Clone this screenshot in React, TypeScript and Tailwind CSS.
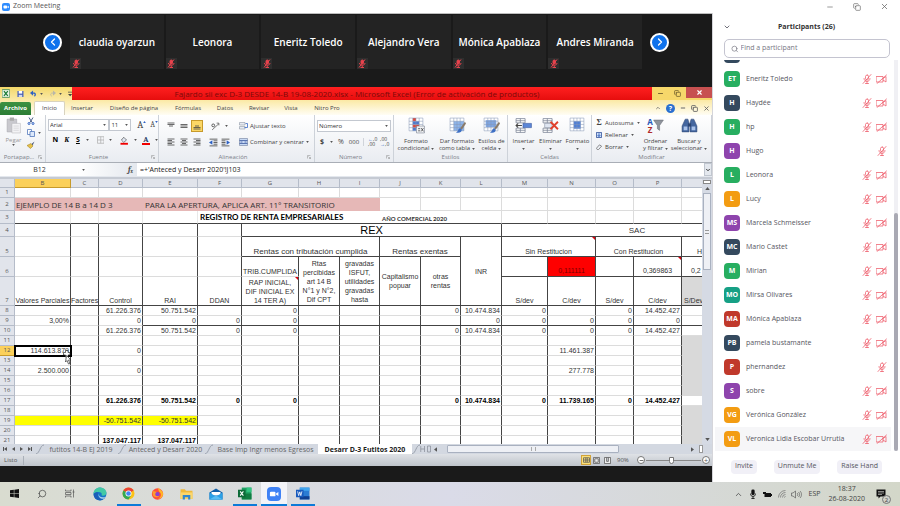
import { useState, type ReactNode } from "react";
import {
  ChevronDown,
  ChevronLeft,
  ChevronRight,
  ChevronUp,
  Copy,
  Minus,
  Search,
  X,
} from "lucide-react";
import clsx from "clsx";

const SPEAKERS = [
  "claudia oyarzun",
  "Leonora",
  "Eneritz Toledo",
  "Alejandro Vera",
  "Mónica Apablaza",
  "Andres Miranda",
];

interface Person {
  initials: string;
  name: string;
  color: string;
  micOnly?: boolean;
}

const PEOPLE: Person[] = [
  { initials: "", name: "", color: "bg-[#34495e]" },
  { initials: "ET", name: "Eneritz Toledo", color: "bg-[#27ae60]" },
  { initials: "H", name: "Haydée", color: "bg-[#34495e]" },
  { initials: "H", name: "hp", color: "bg-[#27ae60]" },
  { initials: "H", name: "Hugo", color: "bg-[#8e44ad]", micOnly: true },
  { initials: "L", name: "Leonora", color: "bg-[#27ae60]" },
  { initials: "L", name: "Lucy", color: "bg-[#f39c12]" },
  { initials: "MS", name: "Marcela Schmeisser", color: "bg-[#8e44ad]" },
  { initials: "MC", name: "Mario Castet", color: "bg-[#34495e]" },
  { initials: "M", name: "Mirian", color: "bg-[#27ae60]" },
  { initials: "MO", name: "Mirsa Olivares", color: "bg-[#16a085]" },
  { initials: "MA", name: "Mónica Apablaza", color: "bg-[#c0392b]" },
  { initials: "PB", name: "pamela bustamante", color: "bg-[#34495e]" },
  { initials: "P", name: "phernandez", color: "bg-[#c0392b]", micOnly: true },
  { initials: "S", name: "sobre", color: "bg-[#8e44ad]" },
  { initials: "VG", name: "Verónica González", color: "bg-[#f39c12]" },
  { initials: "VL", name: "Veronica Lidia Escobar Urrutia", color: "bg-[#f39c12]" },
];

const COLUMNS = ["B", "C", "D", "E", "F", "G", "H", "I", "J", "K", "L", "M", "N", "O", "P", "Q"];
const COL_WIDTHS = [15, 56, 28, 44, 55, 44, 57, 41, 40, 41, 40, 41, 46, 48, 38, 48, 91];

interface SheetRow {
  n: number;
  cells: Record<string, string>;
  bold?: boolean;
}

const ROWS: SheetRow[] = [
  { n: 8, cells: { D: "61.226.376", E: "50.751.542", G: "0", K: "0", L: "10.474.834", M: "0", O: "0", P: "14.452.427" } },
  { n: 9, cells: { B: "3,00%", D: "0", E: "0", F: "0", G: "0", L: "0", M: "0", N: "0", O: "0", P: "0" } },
  { n: 10, cells: { D: "61.226.376", E: "50.751.542", F: "0", G: "0", K: "0", L: "10.474.834", M: "0", N: "0", O: "0", P: "14.452.427" } },
  { n: 11, cells: {} },
  { n: 12, cells: { B: "114.613.879", D: "0", N: "11.461.387" } },
  { n: 13, cells: {} },
  { n: 14, cells: { B: "2.500.000", D: "0", N: "277.778" } },
  { n: 15, cells: {} },
  { n: 16, cells: {} },
  { n: 17, bold: true, cells: { D: "61.226.376", E: "50.751.542", F: "0", G: "0", K: "0", L: "10.474.834", M: "0", N: "11.739.165", O: "0", P: "14.452.427" } },
  { n: 18, cells: {} },
  { n: 19, cells: { D: "-50.751.542", E: "-50.751.542" } },
  { n: 20, cells: {} },
  { n: 21, bold: true, cells: { D: "137.047.117", E: "137.047.117" } },
];

const WHITE_Q = [8, 9, 10, 17];

function Caret() {
  return (
    <svg viewBox="0 0 4 3" className="h-[2px] w-[3px] shrink-0">
      <path d="M0 0h4L2 3z" fill="#555" />
    </svg>
  );
}

function TitleBar() {
  return (
    <header className="flex h-[13px] shrink-0 items-center bg-white text-[7px] text-[#555]">
      <svg viewBox="0 0 16 16" className="mr-[3px] ml-[2px] size-2">
        <rect width="16" height="16" rx="4" fill="#2d8cff" />
        <rect x="3" y="5" width="7" height="6" rx="1.5" fill="#fff" />
        <path d="M10.5 7.5 13.5 5.3v5.4l-3-2.2z" fill="#fff" />
      </svg>
      <h1 className="flex-1">Zoom Meeting</h1>
      <div className="flex items-center gap-[19px] pr-[11px] text-[#666]">
        <button aria-label="Minimize"><Minus size={8} strokeWidth={2} /></button>
        <button aria-label="Restore"><Copy size={8} strokeWidth={2} className="-scale-x-100 -rotate-90" /></button>
        <button aria-label="Close"><X size={9} strokeWidth={2} /></button>
      </div>
    </header>
  );
}

function ArrowButton({ dir }: { dir: "left" | "right" }) {
  const Icon = dir === "left" ? ChevronLeft : ChevronRight;
  return (
    <button
      aria-label={dir === "left" ? "Previous" : "Next"}
      className="flex size-[19px] items-center justify-center rounded-full border-2 border-white bg-[#0e72ed] text-white"
    >
      <Icon size={12} strokeWidth={2.5} />
    </button>
  );
}

function SpeakerStrip() {
  return (
    <section className="flex h-[73px] shrink-0 bg-[#1a1a1a] pt-px">
      <div className="flex h-[54px] w-[70px] shrink-0 items-center justify-end pr-2">
        <ArrowButton dir="left" />
      </div>
      <ul className="grid h-[54px] flex-1 grid-cols-6 gap-[2px]">
        {SPEAKERS.map((name) => (
          <li key={name} className="relative flex items-center justify-center bg-[#232323]">
            <span className="whitespace-nowrap text-[10px] font-semibold text-white">{name}</span>
            <span className="absolute bottom-0 left-0 flex size-[11px] items-center justify-center bg-[#2e2e2e]">
              <svg viewBox="0 0 16 18" className="h-[9px] w-[8px]" fill="none" stroke="#e8434d" strokeWidth="2">
                <rect x="6" y="2" width="5" height="8" rx="2.5" fill="#e8434d" />
                <path d="M3 8c0 6 11 6 11 0M8.500 13v4M5 17h7M14 1 2 17" />
              </svg>
            </span>
          </li>
        ))}
      </ul>
      <div className="flex h-[54px] w-[70px] shrink-0 items-center pl-2">
        <ArrowButton dir="right" />
      </div>
    </section>
  );
}

function ExcelTitle() {
  return (
    <div className="flex h-[13px] shrink-0 bg-[#f6d76a]">
      <div className="flex w-[72px] items-center gap-[6px] bg-linear-to-b from-[#f3d768] to-[#fbeaa6] pl-[2px]">
        <svg viewBox="0 0 16 16" className="size-[9px]">
          <rect width="16" height="16" rx="1" fill="#e8f3e6" stroke="#2e7d3c" strokeWidth="1.5" />
          <path d="m4 3 8 10M12 3 4 13" stroke="#1d7a35" strokeWidth="2.5" />
        </svg>
        <svg viewBox="0 0 16 16" className="ml-px size-2">
          <path d="M1 1h14v14H1z" fill="#4d63b5" />
          <path d="M4 1h8v6H4z" fill="#fff" />
          <path d="M4 10h8v5H4z" fill="#cfd7ef" />
        </svg>
        <span className="flex items-center gap-[3px]">
          <svg viewBox="0 0 16 16" className="size-[7px]">
            <path d="M3 7h7a4 4 0 0 1 0 7" fill="none" stroke="#2f62c4" strokeWidth="3" />
            <path d="M7 1v12L0 7z" fill="#2f62c4" />
          </svg>
          <Caret />
        </span>
        <span className="flex items-center gap-[3px]">
          <svg viewBox="0 0 16 16" className="size-[7px]">
            <path d="M13 7H6a4 4 0 0 0 0 7" fill="none" stroke="#b9b7a8" strokeWidth="2" />
            <path d="M9 1v12l7-6z" fill="#b9b7a8" />
          </svg>
          <Caret />
        </span>
        <svg viewBox="0 0 6 8" className="h-[6px] w-[5px]">
          <path d="M0 1h6v1H0zM0 4h6L3 7z" fill="#444" />
        </svg>
      </div>
      <h2 className="flex-1 bg-linear-to-b from-[#ff1f1f] to-[#e60d0d] pr-[10px] text-center text-[8px] leading-[13px] whitespace-nowrap text-[#7c0a0a]">
        Fajardo sii exc D-3 DESDE 14-B 19-08-2020.xlsx - Microsoft Excel (Error de activación de productos)
      </h2>
      <div className="flex w-[60px] items-center text-[#6b5a2a]">
        <button aria-label="Minimize window" className="flex flex-1 justify-center"><Minus size={7} strokeWidth={3} /></button>
        <button aria-label="Restore window" className="flex flex-1 justify-center"><Copy size={7} strokeWidth={2.5} className="-scale-x-100 -rotate-90" /></button>
        <button aria-label="Close window" className="flex h-[11px] w-[26px] items-center justify-center self-start bg-[#c75050] text-white">
          <X size={7} strokeWidth={4} />
        </button>
      </div>
    </div>
  );
}

const MENU = [
  { label: "Insertar", cls: "w-[34px]" },
  { label: "Diseño de página", cls: "w-[70px]" },
  { label: "Fórmulas", cls: "w-[38px]" },
  { label: "Datos", cls: "w-[36px]" },
  { label: "Revisar", cls: "w-[32px]" },
  { label: "Vista", cls: "w-[32px]" },
  { label: "Nitro Pro", cls: "w-[40px]" },
];

function RibbonTabs() {
  return (
    <nav className="flex h-[15px] shrink-0 items-end bg-linear-to-b from-[#fbe9a4] to-[#fffdf4] text-[6px] text-[#444]">
      <button className="h-[13px] w-[31px] rounded-t-[2px] bg-linear-to-b from-[#3d9142] to-[#2c7d35] font-bold text-white">Archivo</button>
      <button className="ml-[3px] h-[14px] w-[31px] rounded-t-[2px] border-x border-t border-[#d8d3bf] bg-white">Inicio</button>
      {MENU.map((m) => (
        <button key={m.label} className={clsx("h-[14px] whitespace-nowrap", m.cls)}>{m.label}</button>
      ))}
      <div className="ml-auto flex h-[14px] items-center gap-[5px] pr-[2px] text-[#666]">
        <ChevronUp size={6} strokeWidth={3} />
        <button aria-label="Help" className="flex size-[9px] items-center justify-center rounded-full bg-[#2a6fd0] text-[7px] leading-none font-bold text-white">?</button>
        <Minus size={6} strokeWidth={4} />
        <Copy size={7} strokeWidth={3} className="-scale-x-100 -rotate-90" />
        <X size={7} strokeWidth={3} />
      </div>
    </nav>
  );
}

function Group({ label, cls, launcher, children }: { label: string; cls: string; launcher?: boolean; children: ReactNode }) {
  return (
    <section className={clsx("flex shrink-0 flex-col border-r border-[#cdd2d9]", cls)}>
      <div className="min-h-0 flex-1">{children}</div>
      <div className="flex h-[10px] items-center text-[6px] text-[#7b8089]">
        <span className="flex-1 text-center whitespace-nowrap">{label}</span>
        {launcher && (
          <svg viewBox="0 0 8 8" className="mr-[3px] size-[4px]">
            <path d="M1 7V1h6M3 3l4 4M7 4v3H4" fill="none" stroke="#888" />
          </svg>
        )}
      </div>
    </section>
  );
}

function AlignIcon({ kind }: { kind: "top" | "middle" | "bottom" | "left" | "center" | "right" }) {
  const paths = {
    top: "M1 2h14M1 5h14M4 8h8",
    middle: "M1 5h14M1 8h14M1 11h14",
    bottom: "M4 8h8M1 11h14M1 14h14",
    left: "M1 2h14M1 5h9M1 8h14M1 11h9M1 14h14",
    center: "M1 2h14M4 5h8M1 8h14M4 11h8M1 14h14",
    right: "M1 2h14M6 5h9M1 8h14M6 11h9M1 14h14",
  };
  return (
    <svg viewBox="0 0 16 16" className="size-[8px]">
      <path d={paths[kind]} stroke="#444" strokeWidth="1.6" />
    </svg>
  );
}

function IndentIcon({ flip }: { flip?: boolean }) {
  return (
    <svg viewBox="0 0 16 16" className={clsx("size-[9px]", flip && "-scale-x-100")}>
      <path d="M1 2h14M8 5h7M8 8h7M8 11h7M1 14h14" stroke="#555" strokeWidth="1.6" />
      <path d="M6 4v8L0 8z" fill="#2f62c4" />
    </svg>
  );
}

function GridIcon({ kind }: { kind: "cond" | "table" | "cell" | "insert" | "delete" | "format" }) {
  const loose = kind === "insert" || kind === "delete";
  return (
    <svg viewBox="0 0 32 32" className="size-[17px]">
      {loose ? (
        <>
          <path d="M2 3h17v8H2zM2 21h17v8H2zM10 3v8M10 21v8M2 25h17M2 7h17" fill="#fff" stroke="#7d8798" strokeWidth="1.5" />
          {kind === "insert" ? (
            <>
              <path d="M15 12h16v8H15z" fill="#5b86d6" stroke="#35549b" />
              <path d="M13 16H2M6 12l-4 4 4 4" fill="none" stroke="#444" strokeWidth="2" />
            </>
          ) : (
            <>
              <path d="M5 12h14v8H5z" fill="#dfe6f2" stroke="#7d8798" />
              <path d="m16 9 14 14M30 9 16 23" stroke="#e0412c" strokeWidth="3.5" />
            </>
          )}
        </>
      ) : (
        <>
          <path d="M2 2h26v24H2z" fill="#fff" />
          {kind === "cond" && (
            <>
              <path d="M9 2h6v6H9zM9 14h12v6H9z" fill="#e0483a" />
              <path d="M9 8h12v6H9zM9 20h6v6H9z" fill="#4b78cf" />
            </>
          )}
          {kind === "table" && <path d="M9 8h19v18H9z" fill="#8db4ea" />}
          {kind === "cell" && <path d="M5 6h20v13H5z" fill="#7fa6e3" />}
          {kind === "format" && <path d="M9 8h13v14H9z" fill="#4f7fd6" />}
          <path d="M2 2h26v24H2zM9 2v24M15 2v24M21 2v24M2 8h26M2 14h26M2 20h26" fill="none" stroke="#8797b5" />
          {kind === "cond" && (
            <>
              <path d="M16 17h15v13H16z" fill="#f1f3f6" stroke="#6a7280" />
              <path d="M19 22h4M19 26h4M25 21l4 6M29 21l-4 6" stroke="#444" strokeWidth="1.5" />
            </>
          )}
          {(kind === "table" || kind === "cell") && (
            <>
              <path d="m30 9-9 12 3 3 8-12z" fill="#8a7a68" />
              <path d="M21 21c-4 0-3 6-8 8 6 2 11 0 11-5z" fill="#3d6fc4" />
            </>
          )}
        </>
      )}
    </svg>
  );
}

function BigButton({ lines, caretBelow, cls, children }: { lines: string[]; caretBelow?: boolean; cls: string; children: ReactNode }) {
  return (
    <button className={clsx("flex flex-col items-center text-[6px] leading-[7px] whitespace-nowrap text-[#444]", cls)}>
      <span className="mb-[4px] flex h-[17px] items-center">{children}</span>
      {lines.map((l, i) => (
        <span key={l} className="flex items-center gap-[2px]">
          {l}
          {!caretBelow && i === lines.length - 1 && <Caret />}
        </span>
      ))}
      {caretBelow && <span className="flex h-[7px] items-center"><Caret /></span>}
    </button>
  );
}

function Pick({ label, value, cls }: { label: string; value: string; cls: string }) {
  return (
    <label className={clsx("relative flex items-center border border-[#c3c8d0] bg-white", cls)}>
      <select aria-label={label} defaultValue={value} className="h-[10px] w-full appearance-none pl-[1px] text-[6px] leading-[10px] text-[#333] outline-none">
        <option>{value}</option>
      </select>
      <span className="pointer-events-none absolute right-[2px] flex"><Caret /></span>
    </label>
  );
}

function Ribbon() {
  return (
    <div className="flex h-[48px] shrink-0 overflow-hidden border-b border-[#a9aeb6] bg-linear-to-b from-white to-[#e9ecf1] text-[6px] text-[#444]">
      <Group label="Portapap…" cls="w-[46px]" launcher>
        <div className="flex pt-[2px] pl-[5px]">
          <button className="flex w-[17px] flex-col items-center text-[#999]">
            <svg viewBox="0 0 32 32" className="size-[17px]">
              <path d="M4 4h18v24H4z" fill="#c9c9ce" stroke="#a5a5aa" />
              <path d="M9 1h8v6H9z" fill="#aaa" />
              <path d="M13 12h16v18H13z" fill="#f3f3f5" stroke="#b3b3b8" />
              <path d="M16 17h10M16 21h10M16 25h10" stroke="#c5c5c9" />
            </svg>
            <span className="mt-[3px] leading-[7px]">Pegar</span>
            <Caret />
          </button>
          <div className="flex flex-col gap-[4px] pl-[5px]">
            <button aria-label="Cortar">
              <svg viewBox="0 0 16 16" className="size-[8px]">
                <path d="m4 1 6 10M12 1 6 11" stroke="#4a5d86" strokeWidth="2" />
                <circle cx="4" cy="13" r="2" fill="none" stroke="#2f62c4" strokeWidth="2" />
                <circle cx="12" cy="13" r="2" fill="none" stroke="#2f62c4" strokeWidth="2" />
              </svg>
            </button>
            <button aria-label="Copiar" className="flex items-center gap-[3px]">
              <svg viewBox="0 0 16 16" className="size-[8px]">
                <path d="M1 1h8v10H1z" fill="#fff" stroke="#4a72b8" strokeWidth="1.5" />
                <path d="M6 5h9v10H6z" fill="#dce8fa" stroke="#4a72b8" strokeWidth="1.5" />
              </svg>
              <Caret />
            </button>
            <button aria-label="Copiar formato">
              <svg viewBox="0 0 16 16" className="size-[8px]">
                <path d="m15 1-6 5 2 3z" fill="#46557a" />
                <path d="m8 5 4 5-5 5-7-6z" fill="#e5c04a" stroke="#9c7c1c" />
              </svg>
            </button>
          </div>
        </div>
      </Group>
      <Group label="Fuente" cls="w-[113px]" launcher>
        <div className="flex items-center pt-[4px] pl-[2px]">
          <Pick label="Fuente" value="Arial" cls="w-[62px]" />
          <Pick label="Tamaño" value="11" cls="w-[22px]" />
          <button aria-label="Aumentar tamaño" className="ml-[6px] flex items-start font-serif text-[10px] leading-[12px]">
            A<svg viewBox="0 0 4 3" className="mt-[2px] h-[2px] w-[3px]"><path d="M0 3h4L2 0z" fill="#2f62c4" /></svg>
          </button>
          <button aria-label="Disminuir tamaño" className="ml-[4px] flex items-start font-serif text-[8px] leading-[12px]">
            A<svg viewBox="0 0 4 3" className="mt-[2px] h-[2px] w-[3px]"><path d="M0 0h4L2 3z" fill="#2f62c4" /></svg>
          </button>
        </div>
        <div className="flex h-[12px] items-center gap-[5px] pt-[6px] pl-[6px] text-[7px] text-black">
          <button className="w-[7px] font-bold">N</button>
          <button className="w-[7px] font-serif font-bold italic">K</button>
          <button className="w-[6px] font-bold underline">S</button>
          <Caret />
          <svg viewBox="0 0 16 16" className="ml-[3px] size-[8px]"><path d="M1 1h14v14H1zM8 1v14M1 8h14" fill="none" stroke="#aaa" strokeWidth="1.5" /></svg>
          <Caret />
          <svg viewBox="0 0 18 18" className="ml-[3px] size-[9px]">
            <path d="m8 2 6 6-6 5-5-5z" fill="#dfe6f2" stroke="#555" strokeWidth="1.5" />
            <path d="M1 14h16v4H1z" fill="#f00000" />
          </svg>
          <Caret />
          <span className="flex w-[9px] flex-col items-center">
            <span className="font-serif text-[8px] leading-[7px] font-bold text-[#2b3d66]">A</span>
            <span className="h-[2px] w-full bg-[#f00000]" />
          </span>
          <Caret />
        </div>
      </Group>
      <Group label="Alineación" cls="w-[156px]" launcher>
        <div className="flex h-[22px] items-center pl-[8px]">
          <div className="flex w-[68px] items-center gap-[5px]">
            <AlignIcon kind="top" />
            <AlignIcon kind="middle" />
            <span className="-mx-[2px] flex size-[12px] items-center justify-center border border-[#c79a2b] bg-[#fbd766]"><AlignIcon kind="bottom" /></span>
            <svg viewBox="0 0 16 16" className="ml-[5px] size-[9px]">
              <path d="M2 14 14 3M10 2h4v4" fill="none" stroke="#666" strokeWidth="1.5" />
              <circle cx="4" cy="6" r="2.5" fill="none" stroke="#444" strokeWidth="1.5" />
            </svg>
            <Caret />
          </div>
          <button className="ml-[4px] flex items-center gap-[2px]">
            <svg viewBox="0 0 18 16" className="h-[8px] w-[9px]">
              <path d="M1 1h11v5H1zM1 9h11v5H1z" fill="#e8ecf3" stroke="#7b8494" />
              <path d="M13 3h4v8h-6" fill="none" stroke="#2f62c4" strokeWidth="1.5" />
            </svg>
            Ajustar texto
          </button>
        </div>
        <div className="flex h-[10px] items-center pl-[8px]">
          <div className="flex w-[68px] items-center gap-[5px]">
            <AlignIcon kind="left" />
            <AlignIcon kind="center" />
            <AlignIcon kind="right" />
            <span className="ml-[3px] flex gap-[3px]"><IndentIcon /><IndentIcon flip /></span>
          </div>
          <button className="ml-[4px] flex items-center gap-[2px] whitespace-nowrap">
            <svg viewBox="0 0 18 16" className="h-[8px] w-[9px]">
              <path d="M1 1h16v14H1z" fill="#c8daf5" stroke="#5a6b8c" />
              <path d="M1 5h16M1 11h16M3 8h4M15 8h-4" stroke="#35549b" strokeWidth="1.5" />
            </svg>
            Combinar y centrar
            <Caret />
          </button>
        </div>
      </Group>
      <Group label="Número" cls="w-[79px]" launcher>
        <div className="px-[2px] pt-[5px]">
          <Pick label="Formato de número" value="Número" cls="w-full" />
        </div>
        <div className="flex h-[20px] items-center pl-[5px] text-[7px]">
          <button className="mr-[6px] font-bold">$</button>
          <Caret />
          <button className="ml-[5px]">%</button>
          <button className="ml-[5px] text-[6px]">000</button>
          <span className="mx-[4px] h-[8px] border-l border-[#d0d4da]" />
          <button className="w-[12px] text-left text-[5px] leading-[5px] whitespace-nowrap"><span className="text-[#2f62c4]">←</span>,0<br />,00</button>
          <button className="w-[11px] text-left text-[5px] leading-[5px] whitespace-nowrap">,00<br /><span className="text-[#2f62c4]">→</span>,0</button>
        </div>
      </Group>
      <Group label="Estilos" cls="w-[114px]">
        <div className="flex pt-[2px]">
          <BigButton lines={["Formato", "condicional"]} cls="w-[44px]"><GridIcon kind="cond" /></BigButton>
          <BigButton lines={["Dar formato", "como tabla"]} cls="w-[38px]"><GridIcon kind="table" /></BigButton>
          <BigButton lines={["Estilos de", "celda"]} cls="w-[31px]"><GridIcon kind="cell" /></BigButton>
        </div>
      </Group>
      <Group label="Celdas" cls="w-[84px]">
        <div className="flex pt-[2px] pl-[2px]">
          <BigButton lines={["Insertar"]} caretBelow cls="w-[27px]"><GridIcon kind="insert" /></BigButton>
          <BigButton lines={["Eliminar"]} caretBelow cls="w-[27px]"><GridIcon kind="delete" /></BigButton>
          <BigButton lines={["Formato"]} caretBelow cls="w-[27px]"><GridIcon kind="format" /></BigButton>
        </div>
      </Group>
      <Group label="Modificar" cls="w-[120px]">
        <div className="flex pt-[2px]">
          <div className="flex w-[48px] flex-col pl-[4px]">
            <button className="flex h-[12px] items-center gap-[3px]"><b className="w-[6px] font-serif text-[8px]">Σ</b>Autosuma <Caret /></button>
            <button className="flex h-[12px] items-center gap-[3px]">
              <svg viewBox="0 0 14 14" className="size-[6px]"><path d="M1 1h12v12H1z" fill="#cfe0f8" stroke="#35549b" strokeWidth="2" /><path d="M7 3v6M4 7l3 4 3-4" fill="none" stroke="#2456b8" strokeWidth="2" /></svg>
              Rellenar <Caret />
            </button>
            <button className="flex h-[12px] items-center gap-[3px]">
              <svg viewBox="0 0 14 14" className="size-[6px]"><path d="m1 10 7-8 5 3-7 8H3z" fill="#eef1f6" stroke="#555" strokeWidth="1.5" /></svg>
              Borrar <Caret />
            </button>
          </div>
          <BigButton lines={["Ordenar", "y filtrar"]} cls="w-[31px]">
            <span className="flex flex-col text-[8px] leading-[8px] font-bold"><span className="text-[#2456b8]">A</span><span className="text-[#b02a2a]">Z</span></span>
            <svg viewBox="0 0 20 24" className="h-[13px] w-[11px]"><path d="M1 2h18l-7 10v9l-4-3v-6z" fill="#8f949c" stroke="#666b73" /></svg>
          </BigButton>
          <BigButton lines={["Buscar y", "seleccionar"]} cls="w-[36px]">
            <svg viewBox="0 0 32 28" className="h-[15px] w-[17px]">
              <path d="M8 2h5l2 7v17H2V15zM24 2h-5l-2 7v17h13V15z" fill="#44669f" stroke="#2d4673" />
              <path d="M5 16h7v7H5zM20 16h7v7h-7z" fill="#a9c2ea" />
              <path d="M13 10h6v6h-6z" fill="#2d4673" />
            </svg>
          </BigButton>
        </div>
      </Group>
    </div>
  );
}

function FormulaBar() {
  const [formula, setFormula] = useState("=+'Anteced y Desarr 2020'!J103");
  return (
    <div className="flex h-[16px] shrink-0 items-start border-b-2 border-[#c5cad3] bg-[#e4e8ee]">
      <input aria-label="Nombre de celda" defaultValue="B12" className="h-[13px] w-[79px] bg-white text-center text-[7px] text-[#333] outline-none" />
      <div className="flex h-[13px] w-[58px] items-center justify-between bg-linear-to-r from-white to-[#e4e8ee] pr-[4px] pl-[3px]">
        <Caret />
        <button aria-label="Insertar función" className="font-serif text-[8px] font-bold text-[#444] italic">f<sub className="text-[5px]">x</sub></button>
      </div>
      <input
        aria-label="Barra de fórmulas"
        value={formula}
        onChange={(e) => setFormula(e.target.value)}
        className="h-[13px] flex-1 bg-white pl-[3px] text-[7px] text-[#222] outline-none"
      />
      <button aria-label="Expandir" className="flex h-[13px] w-[8px] items-center justify-center border border-[#c0c6cf]"><ChevronDown size={6} strokeWidth={3} /></button>
    </div>
  );
}

const HEAD = "border-r border-b border-[#b5bcc9] bg-[#e1e4eb] p-0 text-center font-[Open_Sans,sans-serif] text-[6px] font-normal text-[#555]";
const HEAD_ACTIVE = "border-r border-b border-[#c79a2b] bg-[#fbd05a] p-0 text-center font-[Open_Sans,sans-serif] text-[6px] font-normal text-[#555]";
const LIGHT = "border-r border-b border-[#dcdcdc] p-0";
const BLOCK = "border-r border-b border-[#444] p-0 text-center font-normal";

function RowHead({ n, h, low }: { n: number; h: string; low?: boolean }) {
  return (
    <th scope="row" className={clsx(n === 12 ? HEAD_ACTIVE : HEAD, h, low ? "align-bottom" : "align-middle")}>
      {n}
    </th>
  );
}

function Flag() {
  return <span className="absolute top-0 right-0 border-t-[3px] border-l-[3px] border-t-[#d8000c] border-l-transparent" />;
}

function blanks(count: number, cls: string) {
  return Array.from({ length: count }, (_, i) => <td key={i} className={cls} />);
}

function Sheet() {
  return (
    <div className="min-w-0 flex-1 overflow-hidden bg-white">
      <table className="w-[773px] table-fixed border-separate border-spacing-0 font-[Liberation_Sans,Arial,sans-serif] text-[7px] leading-[9px] text-[#333]">
        <colgroup>
          {COL_WIDTHS.map((w, i) => <col key={i} style={{ width: w }} />)}
        </colgroup>
        <thead>
          <tr>
            <th className={clsx(HEAD, "h-[9px] leading-[8px]")} />
            {COLUMNS.map((c) => (
              <th key={c} scope="col" className={clsx(c === "B" ? HEAD_ACTIVE : HEAD, "h-[9px] leading-[8px]")}>{c}</th>
            ))}
          </tr>
        </thead>
        <tbody>
          <tr>
            <RowHead n={1} h="h-[10px]" />
            {blanks(16, LIGHT)}
          </tr>
          <tr className="font-[Open_Sans,sans-serif] text-[8px]">
            <RowHead n={2} h="h-[13px]" />
            <td colSpan={3} className="bg-[#e6b8b7] p-0 pl-px whitespace-nowrap">EJEMPLO DE 14 B a 14 D 3</td>
            <td colSpan={5} className="bg-[#e6b8b7] p-0 pl-[2px] whitespace-nowrap">PARA LA APERTURA, APLICA ART. 11° TRANSITORIO</td>
            {blanks(8, LIGHT)}
          </tr>
          <tr>
            <RowHead n={3} h="h-[13px]" />
            {blanks(4, "border-r border-r-[#e8e8e8] border-b border-b-[#444] p-0")}
            <td colSpan={4} className="border-b border-[#444] p-0 pl-[2px] font-[Lato,sans-serif] text-[8px] font-bold whitespace-nowrap text-black">REGISTRO DE RENTA EMPRESARIALES</td>
            <td colSpan={2} className="border-b border-[#444] p-0 pl-[2px] align-bottom font-[Lato,sans-serif] text-[6px] font-bold whitespace-nowrap">AÑO COMERCIAL 2020</td>
            {blanks(6, "border-r border-r-[#dcdcdc] border-b border-b-[#444] p-0")}
          </tr>
          <tr>
            <RowHead n={4} h="h-[13px]" />
            {blanks(5, "border-r border-b border-r-[#444] border-b-[#dcdcdc] p-0")}
            <th colSpan={6} className={clsx(BLOCK, "text-[11px] leading-[12px] text-black")}>REX</th>
            <th colSpan={5} className={clsx(BLOCK, "text-[8px]")}>SAC</th>
          </tr>
          <tr>
            <RowHead n={5} h="h-[20px]" low />
            {blanks(5, "border-r border-b border-r-[#444] border-b-[#dcdcdc] p-0")}
            <th colSpan={3} className={clsx(BLOCK, "align-bottom text-[8px]")}>Rentas con tributación cumplida</th>
            <th colSpan={2} className={clsx(BLOCK, "align-bottom text-[8px]")}>Rentas exentas</th>
            <th rowSpan={3} className={clsx(BLOCK, "align-middle")}>INR</th>
            <th colSpan={2} className={clsx(BLOCK, "relative align-bottom")}>Sin Restitucion<Flag /></th>
            <th colSpan={2} className={clsx(BLOCK, "align-bottom")}>Con Restitucion</th>
            <th className="border-b border-[#444] p-0 pl-[15px] text-left align-bottom font-normal">H</th>
          </tr>
          <tr>
            <RowHead n={6} h="h-[20px]" low />
            {blanks(5, "border-r border-b border-r-[#444] border-b-[#dcdcdc] p-0")}
            <th className="border-r border-b border-r-[#444] border-b-[#dcdcdc] p-0 align-bottom font-normal">TRIB.CUMPLIDA</th>
            <th rowSpan={2} className={BLOCK}>Rtas<br />percibidas<br />art 14 B<br />N°1 y N°2,<br />Dif CPT</th>
            <th rowSpan={2} className={BLOCK}>gravadas<br />ISFUT,<br />utilidades<br />gravadas<br />hasta</th>
            <th rowSpan={2} className={BLOCK}>Capitalismo<br />popuar</th>
            <th rowSpan={2} className={BLOCK}>otras<br />rentas</th>
            <td className={BLOCK} />
            <td className={clsx(BLOCK, "bg-[#fe0000] align-bottom text-[#7a0000]")}><span className="block pb-[1px]">0,111111</span></td>
            <td className={BLOCK} />
            <td className={clsx(BLOCK, "relative align-bottom")}><span className="block pb-[1px]">0,369863</span><Flag /></td>
            <td className="border-b border-[#444] p-0 pl-[9px] text-left align-bottom"><span className="block pb-[1px]">0,2</span></td>
          </tr>
          <tr>
            <RowHead n={7} h="h-[29px]" low />
            {["Valores Parciales", "Factores", "Control", "RAI", "DDAN"].map((t) => (
              <th key={t} className={clsx(BLOCK, "align-bottom whitespace-nowrap")}>{t}</th>
            ))}
            <th className={clsx(BLOCK, "relative align-bottom")}>RAP INICIAL,<br />DIF INICIAL EX<br />14 TER A)<Flag /></th>
            {["S/dev", "C/dev", "S/dev", "C/dev"].map((t, i) => (
              <th key={i} className={clsx(BLOCK, "align-bottom")}>{t}</th>
            ))}
            <th className="border-b border-[#444] bg-[#d9d9d9] p-0 pl-[2px] text-left align-bottom font-normal">S/Dev</th>
          </tr>
          {ROWS.map((row) => (
            <tr key={row.n} className={clsx(row.bold && "font-bold text-black")}>
              <RowHead n={row.n} h="h-[10px]" />
              {COLUMNS.map((c) => {
                const grey = c === "Q" && !WHITE_Q.includes(row.n);
                const yellow = row.n === 19 && "BCDE".includes(c);
                const dark = row.n === 9 && !"BCD".includes(c);
                const selected = row.n === 12 && c === "B";
                return (
                  <td
                    key={c}
                    className={clsx(
                      "border-r border-b p-0 pr-px text-right",
                      c === "Q" ? "border-r-transparent" : "border-r-[#444]",
                      dark ? "border-b-[#444]" : grey ? "border-b-[#d9d9d9]" : "border-b-[#dcdcdc]",
                      grey && "bg-[#d9d9d9]",
                      yellow && "bg-[#ffff00]",
                      selected && "relative outline-2 -outline-offset-1 outline-black",
                    )}
                  >
                    {row.cells[c]}
                    {selected && (
                      <svg viewBox="0 0 20 30" className="absolute top-[4px] right-[-2px] h-[15px] w-[10px]">
                        <path d="M7 1h5v4h4v5h-4v4H7v-4H3V5h4z" fill="#fff" stroke="#222" strokeWidth="1.3" />
                        <path d="m9 11 9 9h-5l3 7-3 1-3-7-3 3z" fill="#fff" stroke="#222" strokeWidth="1.3" />
                      </svg>
                    )}
                  </td>
                );
              })}
            </tr>
          ))}
        </tbody>
      </table>
    </div>
  );
}

function SheetScroll() {
  return (
    <div className="flex w-[10px] shrink-0 flex-col items-center bg-[#d5dae4] text-[#555]">
      <span className="mt-px h-[4px] w-[8px] border border-[#888] bg-white" />
      <button aria-label="Scroll up" className="flex h-[9px] w-full items-center justify-center">
        <svg viewBox="0 0 6 4" className="h-[3px] w-[5px]"><path d="M0 4h6L3 0z" fill="#555" /></svg>
      </button>
      <span className="flex h-[77px] w-[8px] items-center justify-center border border-[#a9b1c0] bg-[#eef0f5]">
        <span className="h-[4px] w-[4px] border-y border-[#999]" />
      </span>
      <button aria-label="Scroll down" className="mt-auto flex h-[9px] w-full items-center justify-center">
        <svg viewBox="0 0 6 4" className="h-[3px] w-[5px]"><path d="M0 0h6L3 4z" fill="#555" /></svg>
      </button>
    </div>
  );
}

function Slant() {
  return (
    <svg viewBox="0 0 8 10" className="h-[10px] w-[8px] shrink-0">
      <path d="M0 10C4 9 4 1 8 1" fill="none" stroke="#9aa1ad" />
    </svg>
  );
}

function SheetTabs() {
  return (
    <div className="flex h-[10px] shrink-0 items-center bg-[#d3d8e1] text-[7px] leading-[9px] whitespace-nowrap text-[#666]">
      <svg viewBox="0 0 36 8" className="h-[8px] w-[36px] shrink-0" fill="#555">
        <path d="M3 2h1v4H3zM7 2v4L4 4zM15 2v4l-3-2zM20 2v4l3-2zM28 2v4l3-2zM31 2h1v4h-1z" />
      </svg>
      <Slant />
      <button className="w-[74px] text-center">futitos 14-B EJ 2019</button>
      <Slant />
      <button className="w-[79px] text-center">Anteced y Desarr 2020</button>
      <Slant />
      <button className="w-[105px] text-center">Base Imp Ingr menos Egresos</button>
      <button aria-current="page" className="h-[10px] w-[94px] bg-white text-center font-bold text-[#222]">Desarr D-3 Futitos 2020</button>
      <Slant />
      <svg viewBox="0 0 16 10" className="mr-[2px] h-[8px] w-[12px] shrink-0">
        <path d="M1 1v8M6 1v8M1 5h5M10 1h4v8h-4z" fill="none" stroke="#8a8f99" />
      </svg>
      <svg viewBox="0 0 4 6" className="h-[5px] w-[3px]"><path d="M4 0v6L0 3z" fill="#555" /></svg>
      <div className="mx-[10px] flex flex-1 pr-[62px]">
        <span className="flex h-[8px] flex-1 items-center justify-center rounded-[1px] border border-[#a9b1c0] bg-[#eef0f5]">
          <span className="h-[4px] w-[5px] border-x border-[#aaa]" />
        </span>
      </div>
      <svg viewBox="0 0 4 6" className="mr-[5px] h-[5px] w-[3px]"><path d="M0 0v6l4-3z" fill="#555" /></svg>
      <span className="mr-[9px] h-[8px] w-[4px] border border-[#999] bg-white" />
    </div>
  );
}

function StatusBar() {
  return (
    <div className="flex h-[12px] shrink-0 items-center bg-linear-to-b from-[#dfe2e6] to-[#bfc4cb] text-[6px] text-[#555]">
      <span className="w-[24px] border-r border-[#aab0b8] pl-[4px]">Listo</span>
      <div className="ml-auto flex items-center pr-[2px]">
        <button aria-label="Normal" className="flex size-[10px] items-center justify-center border border-[#d0a23a] bg-[#fbe07a]">
          <svg viewBox="0 0 8 8" className="h-[6px] w-[7px]"><path d="M0 1h8v6H0zM0 4h8M3 1v6M5 1v6" fill="none" stroke="#555" /></svg>
        </button>
        <svg viewBox="0 0 8 8" className="ml-[2px] size-[7px]"><path d="M.5.5h7v7h-7zM2 2h4v4H2z" fill="#eee" stroke="#666" /></svg>
        <svg viewBox="0 0 8 8" className="ml-[4px] size-[7px]"><path d="M.5.5h7v7h-7zM3 .5V5h2V.5" fill="#eee" stroke="#666" /></svg>
        <span className="ml-[6px] w-[20px]">90%</span>
        <button aria-label="Alejar" className="flex size-[8px] items-center justify-center rounded-full border border-[#777] bg-white"><Minus size={5} strokeWidth={4} /></button>
        <input
          type="range"
          aria-label="Zoom"
          defaultValue={45}
          className="mx-px h-[8px] w-[55px] appearance-none bg-[linear-gradient(#888,#888)] bg-[length:100%_1px] bg-center bg-no-repeat [&::-webkit-slider-thumb]:h-[7px] [&::-webkit-slider-thumb]:w-[5px] [&::-webkit-slider-thumb]:appearance-none [&::-webkit-slider-thumb]:rounded-b-full [&::-webkit-slider-thumb]:border [&::-webkit-slider-thumb]:border-[#777] [&::-webkit-slider-thumb]:bg-white"
        />
        <button aria-label="Acercar" className="flex size-[8px] items-center justify-center rounded-full border border-[#777] bg-white text-[7px] leading-none">+</button>
      </div>
    </div>
  );
}

function MicMuted() {
  return (
    <svg viewBox="0 0 20 20" className="size-[10px]" fill="none" stroke="#ee5a68" strokeWidth="1.5" strokeLinecap="round">
      <rect x="7" y="2" width="6" height="10" rx="3" />
      <path d="M4 9c0 8 12 8 12 0M10 15v4M7 19h6M18 1 2 19" />
    </svg>
  );
}

function CameraOff() {
  return (
    <svg viewBox="0 0 22 20" className="h-[10px] w-[11px]" fill="none" stroke="#ee5a68" strokeWidth="1.5" strokeLinecap="round">
      <path d="M1 5h13v11H1zM14 9l6-4v11l-6-4M21 2 2 19" />
    </svg>
  );
}

function Participants() {
  return (
    <aside className="flex w-[188px] shrink-0 flex-col border-l border-[#d5d5da] bg-white text-[7px] text-[#555560]">
      <div className="flex h-[26px] shrink-0 items-center pt-[2px] pl-[10px]">
        <button aria-label="Collapse"><ChevronDown size={8} strokeWidth={2.5} /></button>
        <h2 className="flex-1 pr-[18px] text-center font-bold text-[#333]">Participants (26)</h2>
      </div>
      <label className="mr-[10px] ml-[11px] flex h-[19px] shrink-0 items-center gap-[2px] rounded-[5px] border border-[#c4c4d0] pl-[6px]">
        <Search size={8} className="text-[#6b6b78]" />
        <input aria-label="Find a participant" placeholder="Find a participant" className="w-full text-[7px] outline-none placeholder:text-[#777784]" />
      </label>
      <div className="mt-[2px] flex min-h-0 flex-1">
        <ul className="flex flex-1 flex-col justify-end overflow-hidden pl-[2px]">
          {PEOPLE.map((p, i) => (
            <li key={i} className={clsx("flex h-6 shrink-0 items-center pr-[4px] pl-[9px]", i === PEOPLE.length - 1 && "bg-[#f6f6f8]")}>
              <span className={clsx("flex size-4 items-center justify-center rounded-[4px] font-bold text-white", p.color)}>{p.initials}</span>
              <span className="ml-[6px] flex-1 whitespace-nowrap">{p.name}</span>
              <span className="flex gap-[4px]">
                <MicMuted />
                {!p.micOnly && <CameraOff />}
              </span>
            </li>
          ))}
        </ul>
        <div className="mr-[2px] ml-[3px] flex w-[4px] flex-col justify-end bg-[#f0f0f4]">
          <span className="h-[61%] rounded-[2px] bg-[#a9a9b3]" />
        </div>
      </div>
      <div className="flex h-[31px] shrink-0 items-center justify-between pr-[18px] pl-[18px] text-[7px]">
        {["Invite", "Unmute Me", "Raise Hand"].map((t) => (
          <button key={t} className="h-[14px] rounded-[4px] bg-[#f1f0f7] px-[4px]">{t}</button>
        ))}
      </div>
    </aside>
  );
}

function TaskButton({ label, open, active, narrow, children }: { label: string; open?: boolean; active?: boolean; narrow?: boolean; children: ReactNode }) {
  return (
    <button aria-label={label} className={clsx("flex h-full flex-col items-center", narrow ? "w-[28px]" : "w-[29px]")}>
      <span className={clsx("flex w-[26px] flex-1 items-center justify-center pt-px", active && "bg-[#f3f4f8]")}>{children}</span>
      {open && <span className={clsx("h-[2px] bg-[#0c7bd8]", active ? "w-[26px]" : "w-[24px]")} />}
      {!open && <span className="h-[2px]" />}
    </button>
  );
}

function Taskbar() {
  return (
    <footer className="flex h-[24px] shrink-0 items-center bg-linear-to-r from-[#d9dcd0] via-[#dadbe8] via-50% to-[#d3d7c9] text-[7px] text-[#444]">
      <TaskButton label="Inicio" narrow>
        <svg viewBox="0 0 16 16" className="size-[9px]"><path d="M0 2.3 6.8 1.4v6.1H0zM7.7 1.2 16 0v7.5H7.7zM0 8.5h6.8v6.1L0 13.7zM7.7 8.5H16V16l-8.3-1.2z" fill="#111" /></svg>
      </TaskButton>
      <TaskButton label="Buscar" narrow><Search size={10} strokeWidth={1.7} className="-scale-x-100" /></TaskButton>
      <TaskButton label="Vista de tareas" narrow>
        <svg viewBox="0 0 20 18" className="h-[9px] w-[10px]" fill="none" stroke="#555" strokeWidth="1.4"><path d="M1 1v3h11V1M1 17v-3h11v3M1 7h11v4H1zM17 1v16M15 6h4" /></svg>
      </TaskButton>
      <span className="w-px" />
      <TaskButton label="Edge">
        <svg viewBox="0 0 24 24" className="size-[14px]">
          <circle cx="12" cy="12" r="11" fill="#1676c8" />
          <path d="M1 12C1 5 6 1 12 1c7 0 11 5 11 9 0 3-2 5-6 5-2 0-3-1-2-2 1-5-8-6-14-1" fill="#43c9a5" />
          <path d="M1 12c3-4 8-4 8-1-3 5 2 10 9 9-6 5-17 3-17-8" fill="#1b5fb8" />
          <path d="M10 11c-1 5 4 8 11 6l-2 3c-6 1-11-3-9-9" fill="#eaf2fa" opacity=".7" />
        </svg>
      </TaskButton>
      <TaskButton label="Chrome" open>
        <svg viewBox="0 0 24 24" className="size-[13px]">
          <circle cx="12" cy="12" r="11" fill="#fbc116" />
          <path d="M12 12 2.5 6.5a11 11 0 0 1 19 0z" fill="#ea4335" />
          <path d="M12 12 2.5 6.5A11 11 0 0 0 12 23l5-8z" fill="#34a853" />
          <circle cx="12" cy="12" r="5.5" fill="#fff" />
          <circle cx="12" cy="12" r="4.2" fill="#4285f4" />
        </svg>
      </TaskButton>
      <TaskButton label="Firefox">
        <svg viewBox="0 0 24 24" className="size-[13px]">
          <circle cx="12" cy="13" r="10.5" fill="#ff4f3a" />
          <path d="M14 1c1 4 8 5 8.500 12-1 6-5 9-10 9 5-2 8-8 4-12-2-2-4-5-2.500-9" fill="#ffb627" />
          <path d="M3 5c0 2 1 3 3 3l5 1-2 3c-3 4 3 6 6 4-2 5-12 4-12-4z" fill="#ff9a2e" />
          <circle cx="12" cy="13" r="4" fill="#8a3fd1" />
        </svg>
      </TaskButton>
      <TaskButton label="Explorador">
        <svg viewBox="0 0 24 22" className="h-[12px] w-[13px]"><path d="M1 2h8l2 3h12v15H1z" fill="#f0b93a" /><path d="M1 8h22v12H1z" fill="#fbd66b" /><path d="M5 13h14v8h-4v-4H9v4H5z" fill="#2f87d0" /></svg>
      </TaskButton>
      <TaskButton label="Correo">
        <svg viewBox="0 0 28 24" className="h-[12px] w-[14px]"><path d="M1 9 14 1l13 8v14H1z" fill="#0f5fa8" /><path d="M5 8h18v7H5z" fill="#fff" /><path d="m1 9 13 8 13-8v14H1z" fill="#2ba0e6" /><path d="m1 23 13-8 13 8z" fill="#57bdf4" /></svg>
      </TaskButton>
      <TaskButton label="Excel" open>
        <svg viewBox="0 0 26 24" className="h-[13px] w-[14px]"><path d="M7 1h18v22H7z" fill="#21a366" /><path d="M16 1h9v8h-9z" fill="#33c481" /><path d="M7 12h18v11H7z" fill="#107c41" /><path d="M0 5h14v14H0z" fill="#0c6a37" /><path d="m4 8 6 8M10 8l-6 8" stroke="#fff" strokeWidth="2" /></svg>
      </TaskButton>
      <TaskButton label="Zoom" open active>
        <svg viewBox="0 0 24 24" className="size-[14px]"><rect width="24" height="24" rx="7" fill="#3f82f5" /><rect x="5" y="8" width="9.500" height="8" rx="2" fill="#fff" /><path d="m15.500 11 4-2.500v7l-4-2.500z" fill="#fff" /></svg>
      </TaskButton>
      <TaskButton label="Word" open>
        <svg viewBox="0 0 26 24" className="h-[13px] w-[14px]"><path d="M7 1h18v22H7z" fill="#2b7cd3" /><path d="M7 1h18v6H7z" fill="#41a5ee" /><path d="M7 17h18v6H7z" fill="#103f91" /><path d="M0 5h14v14H0z" fill="#185abd" /><path d="m3 8 2 8 2-7 2 7 2-8" fill="none" stroke="#fff" strokeWidth="1.500" /></svg>
      </TaskButton>
      <div className="ml-auto flex items-center pr-[14px]">
        <ChevronUp size={9} className="mr-[7px]" />
        <svg viewBox="0 0 10 18" className="mr-[7px] h-[10px] w-[6px]"><rect x="2" y="1" width="6" height="10" rx="2.500" fill="#111" /><path d="M0 8c0 7 10 7 10 0M5 13v5M2 17h6" fill="none" stroke="#111" strokeWidth="1.500" /></svg>
        <svg viewBox="0 0 18 12" className="mr-[6px] h-[7px] w-[9px]"><path d="M3 3h13v8H3z" fill="#111" /><path d="M0 1h6v4H0zM16 5h2v4h-2z" fill="#111" /></svg>
        <svg viewBox="0 0 16 16" className="mr-[5px] size-[8px]" fill="none" stroke="#666" strokeWidth="1.3">
          <path d="M1 15A14 14 0 0 1 15 1M5 15A10 10 0 0 1 15 5M9 15a6 6 0 0 1 6-6M13 15a2 2 0 0 1 2-2" />
        </svg>
        <svg viewBox="0 0 22 18" className="mr-[7px] h-[9px] w-[11px]" fill="none" stroke="#555" strokeWidth="1.3">
          <path d="M1 6h3l5-4v14l-5-4H1zM12 6c2 2 2 4 0 6M15 4c3 3 3 7 0 10M18 2c4 4 4 10 0 14" />
        </svg>
        <span className="mr-[8px]">ESP</span>
        <time className="mr-[11px] text-center leading-[10px]">18:37<br />26-08-2020</time>
        <button aria-label="Notificaciones" className="relative">
          <svg viewBox="0 0 20 20" className="size-[10px]"><path d="M1 1h18v14H9l-4 4v-4H1z" fill="#111" /><path d="M4 5h12M4 8h12M4 11h8" stroke="#dcdcd6" strokeWidth="1.200" /></svg>
          <span className="absolute -right-[5px] -bottom-[5px] flex size-[9px] items-center justify-center rounded-full border border-[#777] bg-[#d0d2ca] text-[6px] leading-none">2</span>
        </button>
      </div>
    </footer>
  );
}

export default function App() {
  return (
    <div className="flex h-screen flex-col overflow-hidden bg-white font-[Open_Sans,sans-serif]">
      <TitleBar />
      <div className="flex min-h-0 flex-1">
        <main className="flex min-w-0 flex-1 flex-col overflow-hidden border-t border-[#bdbdbd] bg-[#1a1a1a] pb-[16px]">
          <SpeakerStrip />
          <ExcelTitle />
          <RibbonTabs />
          <Ribbon />
          <FormulaBar />
          <div className="flex min-h-0 flex-1">
            <Sheet />
            <SheetScroll />
          </div>
          <SheetTabs />
          <StatusBar />
        </main>
        <Participants />
      </div>
      <Taskbar />
    </div>
  );
}
